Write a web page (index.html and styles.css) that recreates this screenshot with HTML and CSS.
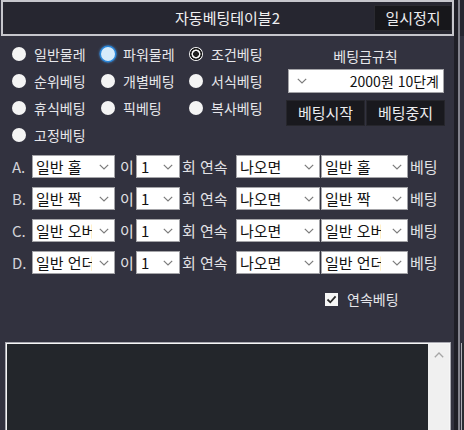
FILE: index.html
```html
<!DOCTYPE html>
<html lang="ko">
<head>
<meta charset="utf-8">
<title>자동베팅테이블2</title>
<link rel="stylesheet" href="styles.css">
</head>
<body>
<div class="screen">
  <div class="panel">
    <div class="titlebar">
      <div class="title">자동베팅테이블2</div>
      <button class="pause">일시정지</button>
    </div>

    <div class="options">
      <div class="radios">
        <label class="radio"><span class="dot"></span>일반물레</label>
        <label class="radio"><span class="dot focus"></span>파워물레</label>
        <label class="radio"><span class="dot checked"></span>조건베팅</label>
        <label class="radio"><span class="dot"></span>순위베팅</label>
        <label class="radio"><span class="dot"></span>개별베팅</label>
        <label class="radio"><span class="dot"></span>서식베팅</label>
        <label class="radio"><span class="dot"></span>휴식베팅</label>
        <label class="radio"><span class="dot"></span>픽베팅</label>
        <label class="radio"><span class="dot"></span>복사베팅</label>
        <label class="radio"><span class="dot"></span>고정베팅</label>
      </div>
      <div class="rules">
        <div class="rules-title">베팅금규칙</div>
        <div class="sel rule-sel">
          <svg class="chev" width="10" height="6" viewBox="0 0 10 6"><path d="M0.8 0.8 L5 5 L9.2 0.8" fill="none" stroke="#7c7c7c" stroke-width="1.2"/></svg>
          <span class="sel-text">2000원 10단계</span>
        </div>
        <div class="btns">
          <button class="dark-btn">베팅시작</button>
          <button class="dark-btn">베팅중지</button>
        </div>
      </div>
    </div>

    <div class="bets">
      <div class="bet-row">
        <span class="lbl letter">A.</span>
        <div class="sel s-kind"><span class="sel-text">일반 홀</span><svg class="chev" width="10" height="6" viewBox="0 0 10 6"><path d="M0.8 0.8 L5 5 L9.2 0.8" fill="none" stroke="#7c7c7c" stroke-width="1.2"/></svg></div>
        <span class="lbl i">이</span>
        <div class="sel s-num"><span class="sel-text">1</span><svg class="chev" width="10" height="6" viewBox="0 0 10 6"><path d="M0.8 0.8 L5 5 L9.2 0.8" fill="none" stroke="#7c7c7c" stroke-width="1.2"/></svg></div>
        <span class="lbl times">회 연속</span>
        <div class="sel s-cond"><span class="sel-text">나오면</span><svg class="chev" width="10" height="6" viewBox="0 0 10 6"><path d="M0.8 0.8 L5 5 L9.2 0.8" fill="none" stroke="#7c7c7c" stroke-width="1.2"/></svg></div>
        <div class="sel s-target"><span class="sel-text">일반 홀</span><svg class="chev" width="10" height="6" viewBox="0 0 10 6"><path d="M0.8 0.8 L5 5 L9.2 0.8" fill="none" stroke="#7c7c7c" stroke-width="1.2"/></svg></div>
        <span class="lbl bet">베팅</span>
      </div>
      <div class="bet-row">
        <span class="lbl letter">B.</span>
        <div class="sel s-kind"><span class="sel-text">일반 짝</span><svg class="chev" width="10" height="6" viewBox="0 0 10 6"><path d="M0.8 0.8 L5 5 L9.2 0.8" fill="none" stroke="#7c7c7c" stroke-width="1.2"/></svg></div>
        <span class="lbl i">이</span>
        <div class="sel s-num"><span class="sel-text">1</span><svg class="chev" width="10" height="6" viewBox="0 0 10 6"><path d="M0.8 0.8 L5 5 L9.2 0.8" fill="none" stroke="#7c7c7c" stroke-width="1.2"/></svg></div>
        <span class="lbl times">회 연속</span>
        <div class="sel s-cond"><span class="sel-text">나오면</span><svg class="chev" width="10" height="6" viewBox="0 0 10 6"><path d="M0.8 0.8 L5 5 L9.2 0.8" fill="none" stroke="#7c7c7c" stroke-width="1.2"/></svg></div>
        <div class="sel s-target"><span class="sel-text">일반 짝</span><svg class="chev" width="10" height="6" viewBox="0 0 10 6"><path d="M0.8 0.8 L5 5 L9.2 0.8" fill="none" stroke="#7c7c7c" stroke-width="1.2"/></svg></div>
        <span class="lbl bet">베팅</span>
      </div>
      <div class="bet-row">
        <span class="lbl letter">C.</span>
        <div class="sel s-kind"><span class="sel-text">일반 오버</span><svg class="chev" width="10" height="6" viewBox="0 0 10 6"><path d="M0.8 0.8 L5 5 L9.2 0.8" fill="none" stroke="#7c7c7c" stroke-width="1.2"/></svg></div>
        <span class="lbl i">이</span>
        <div class="sel s-num"><span class="sel-text">1</span><svg class="chev" width="10" height="6" viewBox="0 0 10 6"><path d="M0.8 0.8 L5 5 L9.2 0.8" fill="none" stroke="#7c7c7c" stroke-width="1.2"/></svg></div>
        <span class="lbl times">회 연속</span>
        <div class="sel s-cond"><span class="sel-text">나오면</span><svg class="chev" width="10" height="6" viewBox="0 0 10 6"><path d="M0.8 0.8 L5 5 L9.2 0.8" fill="none" stroke="#7c7c7c" stroke-width="1.2"/></svg></div>
        <div class="sel s-target"><span class="sel-text">일반 오버</span><svg class="chev" width="10" height="6" viewBox="0 0 10 6"><path d="M0.8 0.8 L5 5 L9.2 0.8" fill="none" stroke="#7c7c7c" stroke-width="1.2"/></svg></div>
        <span class="lbl bet">베팅</span>
      </div>
      <div class="bet-row">
        <span class="lbl letter">D.</span>
        <div class="sel s-kind"><span class="sel-text">일반 언더</span><svg class="chev" width="10" height="6" viewBox="0 0 10 6"><path d="M0.8 0.8 L5 5 L9.2 0.8" fill="none" stroke="#7c7c7c" stroke-width="1.2"/></svg></div>
        <span class="lbl i">이</span>
        <div class="sel s-num"><span class="sel-text">1</span><svg class="chev" width="10" height="6" viewBox="0 0 10 6"><path d="M0.8 0.8 L5 5 L9.2 0.8" fill="none" stroke="#7c7c7c" stroke-width="1.2"/></svg></div>
        <span class="lbl times">회 연속</span>
        <div class="sel s-cond"><span class="sel-text">나오면</span><svg class="chev" width="10" height="6" viewBox="0 0 10 6"><path d="M0.8 0.8 L5 5 L9.2 0.8" fill="none" stroke="#7c7c7c" stroke-width="1.2"/></svg></div>
        <div class="sel s-target"><span class="sel-text">일반 언더</span><svg class="chev" width="10" height="6" viewBox="0 0 10 6"><path d="M0.8 0.8 L5 5 L9.2 0.8" fill="none" stroke="#7c7c7c" stroke-width="1.2"/></svg></div>
        <span class="lbl bet">베팅</span>
      </div>
    </div>

    <label class="continuous">
      <span class="check"><svg width="13" height="13" viewBox="0 0 13 13"><path d="M2.5 6.5 L5.3 9.3 L10.6 3.4" fill="none" stroke="#2a2a2a" stroke-width="1.8"/></svg></span>
      연속베팅
    </label>

    <div class="log">
      <div class="log-body"></div>
      <div class="scroll">
        <svg width="10" height="6" viewBox="0 0 10 6"><path d="M0.8 5.2 L5 1 L9.2 5.2" fill="none" stroke="#a6a6a6" stroke-width="1.3"/></svg>
      </div>
    </div>
  </div>
  <div class="sep"></div>
  <div class="panel2">
    <div class="title2"></div>
    <div class="log2"></div>
  </div>
</div>
</body>
</html>
```

FILE: styles.css
```css
* { box-sizing: border-box; }

html, body {
  margin: 0;
  padding: 0;
}

body {
  width: 464px;
  height: 430px;
  overflow: hidden;
  background: #32323f;
  font-family: "Noto Sans CJK KR", "Noto Sans", sans-serif;
  color: #e6e6ea;
}

.screen {
  display: flex;
  width: 464px;
  height: 430px;
}

.panel {
  width: 454px;
  flex: none;
  background: #32323f;
  display: flex;
  flex-direction: column;
}

/* title bar */
.titlebar {
  margin-left: 1px;
  height: 36px;
  border: 2px solid #c6c6cc;
  background: #262630;
  display: grid;
  grid-template-columns: 1fr auto 1fr;
  align-items: center;
}

.title {
  grid-column: 2;
  font-size: 15px;
  line-height: 20px;
  color: #f0f0f2;
}

.pause {
  grid-column: 3;
  justify-self: end;
  margin-right: 0;
  width: 78px;
  height: 26px;
  padding: 0;
  border: 1px solid #2a2a30;
  background: #17171b;
  color: #ececee;
  font-family: inherit;
  font-size: 15px;
  line-height: 20px;
}

/* options */
.options {
  display: flex;
  height: 112px;
}

.radios {
  width: 286px;
  padding: 4px 0 0 12px;
  display: grid;
  grid-template-columns: 89px 88px 97px;
  grid-auto-rows: 27px;
}

.radio {
  display: flex;
  align-items: center;
  font-size: 14px;
  line-height: 18px;
  color: #e6e6ea;
  white-space: nowrap;
}

.dot {
  width: 14px;
  height: 14px;
  border-radius: 50%;
  background: #f4f4f4;
  margin-right: 8px;
  flex: none;
}

.dot.focus {
  background: #d6ebfb;
  box-shadow: 0 0 0 1.5px #2a86d8, 0 0 3px 1px #4aa3ff;
}

.dot.checked {
  background: radial-gradient(circle, #1e1e1e 0 2.6px, #f4f4f4 3.2px 4.2px, #1e1e1e 4.8px 5.8px, #f4f4f4 6.3px);
}

.rules {
  width: 159px;
  display: flex;
  flex-direction: column;
}

.rules-title {
  margin-top: 10px;
  height: 20px;
  font-size: 14px;
  line-height: 20px;
  text-align: center;
  color: #e6e6ea;
}

.sel {
  display: flex;
  align-items: center;
  background: #ffffff;
  border: 1px solid #a4a4a8;
  color: #111;
  font-size: 15px;
  line-height: 20px;
}

.sel-text {
  flex: 1;
  min-width: 0;
  overflow: hidden;
  white-space: nowrap;
}

.chev { flex: none; }

.rule-sel {
  margin: 3px 1px 0 2px;
  height: 24px;
  padding: 0 4px 0 8px;
  font-size: 14px;
}

.rule-sel .sel-text { text-align: right; }

.btns {
  display: flex;
  gap: 1px;
  margin-top: 7px;
}

.dark-btn {
  width: 79px;
  height: 26px;
  padding: 0;
  border: 1px solid #26262c;
  background: #19191e;
  color: #ececee;
  font-family: inherit;
  font-size: 15px;
  line-height: 20px;
}

/* bet rows */
.bets {
  padding: 7px 0 0 12px;
  display: flex;
  flex-direction: column;
  gap: 9px;
}

.bet-row {
  display: flex;
  align-items: center;
  height: 23px;
}

.bet-row .sel {
  height: 23px;
  padding: 0 5px 0 3px;
}

.lbl {
  font-size: 15px;
  line-height: 20px;
  color: #e2e2e6;
  white-space: nowrap;
}

.letter { width: 20px; color: #d2d2d8; }
.i { margin-left: 5px; width: 10px; }
.times { margin-left: 2px; width: 50px; }
.bet { margin-left: 2px; }

.s-kind { width: 83px; }
.s-kind .sel-text { margin-right: 7px; }
.s-num { width: 44px; margin-left: 6px; padding-left: 4px !important; padding-right: 6px !important; }
.s-cond { width: 84px; margin-left: 4px; }
.s-target { width: 87px; margin-left: 1px; }
.s-target .sel-text { margin-right: 11px; }

/* continuous betting checkbox */
.continuous {
  display: flex;
  align-items: center;
  margin-top: 17px;
  padding-left: 325px;
  height: 16px;
  font-size: 14px;
  line-height: 16px;
  color: #e6e6ea;
}

.check {
  width: 13px;
  height: 13px;
  background: #f6f6f6;
  margin-right: 9px;
  display: flex;
}

/* log area */
.log {
  margin: 35px 0 0 5px;
  width: 446px;
  flex: 1;
  border: 1px solid #a8a8b0;
  border-bottom: none;
  padding: 1px 1px 0 1px;
  background: #f6f6f6;
  display: flex;
}

.log-body {
  flex: 1;
  background: #23262b;
}

.scroll {
  width: 21px;
  background: #f0f0f0;
  display: flex;
  justify-content: center;
  padding-top: 8px;
}

/* neighbouring panel */
.sep {
  width: 4px;
  flex: none;
  background: #1f1f27;
}

.panel2 {
  flex: 1;
  border-left: 2px solid #82828c;
  background: #32323f;
  display: flex;
  flex-direction: column;
}

.title2 {
  height: 36px;
  background: #262630;
}

.log2 {
  margin: 307px 0 0 1px;
  flex: 1;
  border-left: 1px solid #b0b0b8;
  background: #2a2d33;
}
```
